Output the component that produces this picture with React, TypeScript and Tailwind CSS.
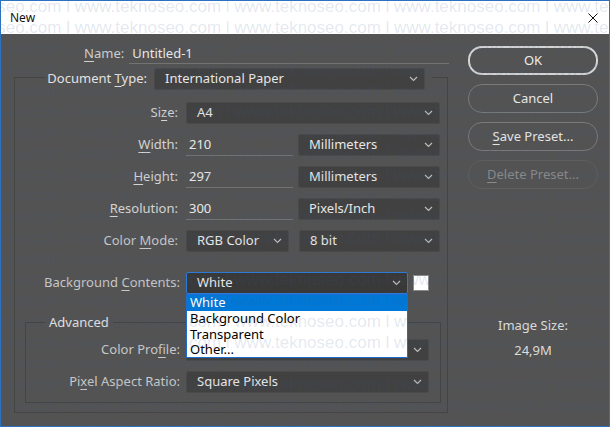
import React from 'react';

// accelerator-key label: underline one character
function Acc({ text, i }: { text: string; i?: number }) {
    if (i === undefined) return <>{text}</>;
    return (
        <>
            {text.slice(0, i)}
            <span className="underline decoration-1 underline-offset-[3px]">{text[i]}</span>
            {text.slice(i + 1)}
        </>
    );
}

function Chevron() {
    return (
        <svg width="9" height="6" viewBox="0 0 9 6" className="shrink-0">
            <path d="M1 1l3.5 3.5L8 1" fill="none" stroke="#bdbdbd" strokeWidth="1.2" />
        </svg>
    );
}

function Select({ value, className = '', focused = false }: { value: string; className?: string; focused?: boolean }) {
    return (
        <div
            className={`flex h-[22px] items-center justify-between rounded-[2px] border pl-[10px] pr-[6px] text-[#e6e6e6] ${
                focused ? 'border-[#2a7ad6] bg-[#393939]' : 'border-[#4a4a4a] bg-[#414141]'
            } ${className}`}
        >
            <span>{value}</span>
            <Chevron />
        </div>
    );
}

function Field({ value, className = '' }: { value: string; className?: string }) {
    return (
        <div className={`flex h-full items-center border-b border-[#737373] pl-[3px] text-[#e8e8e8] ${className}`}>
            {value}
        </div>
    );
}

const watermarkLine = 'www.teknoseo.com l '.repeat(5);

export default function App() {
    return (
        <div className="relative h-[427px] w-[610px] overflow-hidden border border-[#2c72c0] font-['Noto_Sans',sans-serif] text-[13px]">
            {/* title bar */}
            <div className="flex h-[33px] items-center justify-between bg-white pl-[9px] pr-[11px] text-[12px] text-[#111]">
                <span>New</span>
                <svg width="10" height="10" viewBox="0 0 10 10">
                    <path d="M0.5 0.5l9 9M9.5 0.5l-9 9" stroke="#111" strokeWidth="1" />
                </svg>
            </div>

            <div className="flex h-[392px] bg-[#535353] pl-[13px]">
                {/* left column */}
                <div className="w-[435px]">
                    <div className="mt-[10px] flex h-[20px] items-center">
                        <div className="w-[111px] text-right text-[#cfcfcf]">
                            <Acc text="Name:" i={0} />
                        </div>
                        <Field value="Untitled-1" className="ml-[5px] w-[322px]" />
                    </div>

                    <fieldset className="w-[434px] border border-[#444444] pb-[9px]">
                        <legend className="ml-[30px] flex items-center pt-[4px] pr-[7px]">
                            <div className="w-[102px] text-right text-[#e2e2e2]">
                                <Acc text="Document Type:" i={9} />
                            </div>
                            <Select value="International Paper" className="ml-[7px] w-[271px]" />
                        </legend>

                        <div className="mt-[12px] flex flex-col gap-[10px]">
                            <div className="flex h-[22px] items-center">
                                <div className="w-[163px] text-right text-[#d4d4d4]">
                                    <Acc text="Size:" i={2} />
                                </div>
                                <Select value="A4" className="ml-[8px] w-[254px]" />
                            </div>
                            <div className="flex h-[22px] items-center">
                                <div className="w-[163px] text-right text-[#d4d4d4]">
                                    <Acc text="Width:" i={0} />
                                </div>
                                <Field value="210" className="ml-[8px] w-[107px]" />
                                <Select value="Millimeters" className="ml-[5px] w-[142px]" />
                            </div>
                            <div className="flex h-[22px] items-center">
                                <div className="w-[163px] text-right text-[#d4d4d4]">
                                    <Acc text="Height:" i={0} />
                                </div>
                                <Field value="297" className="ml-[8px] w-[107px]" />
                                <Select value="Millimeters" className="ml-[5px] w-[142px]" />
                            </div>
                            <div className="flex h-[22px] items-center">
                                <div className="w-[163px] text-right text-[#d4d4d4]">
                                    <Acc text="Resolution:" i={0} />
                                </div>
                                <Field value="300" className="ml-[8px] w-[107px]" />
                                <Select value="Pixels/Inch" className="ml-[5px] w-[142px]" />
                            </div>
                            <div className="flex h-[22px] items-center">
                                <div className="w-[163px] text-right text-[#c8c8c8]">
                                    <Acc text="Color Mode:" i={6} />
                                </div>
                                <Select value="RGB Color" className="ml-[8px] w-[103px]" />
                                <Select value="8 bit" className="ml-[10px] w-[141px]" />
                            </div>
                        </div>

                        <div className="mt-[20px] flex h-[22px] items-center">
                            <div className="w-[165px] text-right text-[#c8c8c8]">
                                <Acc text="Background Contents:" i={11} />
                            </div>
                            <div className="relative ml-[6px] w-[222px]">
                                <Select value="White" focused />
                                <div className="absolute left-0 top-full z-10 w-[222px] border border-[#1c6dd0] bg-white text-black">
                                    <div className="flex h-[16px] items-center bg-[#0078d7] pl-[3px] text-white">White</div>
                                    <div className="flex h-[16px] items-center pl-[3px]">Background Color</div>
                                    <div className="flex h-[15px] items-center pl-[3px]">Transparent</div>
                                    <div className="flex h-[15px] items-center pl-[3px]">Other...</div>
                                </div>
                            </div>
                            <div className="ml-[5px] h-[16px] w-[16px] border border-[#8a8a8a] bg-white" />
                        </div>

                        <fieldset className="ml-[10px] mt-[19px] w-[416px] border border-[#444444] pb-[9px]">
                            <legend className="ml-[19px] px-[4px] leading-[18px] text-[#e2e2e2]">Advanced</legend>
                            <div className="mt-[8px] flex flex-col gap-[10px]">
                                <div className="flex h-[22px] items-center">
                                    <div className="w-[154px] text-right text-[#c8c8c8]">
                                        <Acc text="Color Profile:" i={9} />
                                    </div>
                                    <Select value="Working RGB: sRGB IEC61966-2.1" className="ml-[6px] w-[243px]" />
                                </div>
                                <div className="flex h-[22px] items-center">
                                    <div className="w-[154px] text-right text-[#c8c8c8]">
                                        <Acc text="Pixel Aspect Ratio:" i={2} />
                                    </div>
                                    <Select value="Square Pixels" className="ml-[6px] w-[243px]" />
                                </div>
                            </div>
                        </fieldset>
                    </fieldset>
                </div>

                {/* right column */}
                <div className="ml-[19px] mt-[12px] flex w-[130px] flex-col">
                    <div className="flex flex-col gap-[9px]">
                        <button className="h-[29px] rounded-[14px] border-2 border-[#d4d4d4] text-[#ececec]">OK</button>
                        <button className="h-[29px] rounded-[14px] border border-[#7a7a7a] text-[#e6e6e6]">Cancel</button>
                        <button className="h-[29px] rounded-[14px] border border-[#7a7a7a] text-[#e6e6e6]">
                            <Acc text="Save Preset..." i={0} />
                        </button>
                        <button className="h-[29px] rounded-[14px] border border-[#5e5e5e] text-[#8a8a8a]">
                            <Acc text="Delete Preset..." i={0} />
                        </button>
                    </div>
                    <div className="mt-[127px] text-center leading-[18px] text-[#dcdcdc]">Image Size:</div>
                    <div className="mt-[7px] text-center leading-[18px] text-[#dcdcdc]">24,9M</div>
                </div>
            </div>

            {/* watermark */}
            <div className="pointer-events-none absolute left-[-86px] top-[-5px] z-20 whitespace-pre font-['Liberation_Sans',Arial,sans-serif] text-[17px] leading-[21px] text-[rgba(60,90,140,0.15)]">
                {Array.from({ length: 21 }).map((_, i) => (
                    <div key={i}>{watermarkLine}</div>
                ))}
            </div>
        </div>
    );
}
